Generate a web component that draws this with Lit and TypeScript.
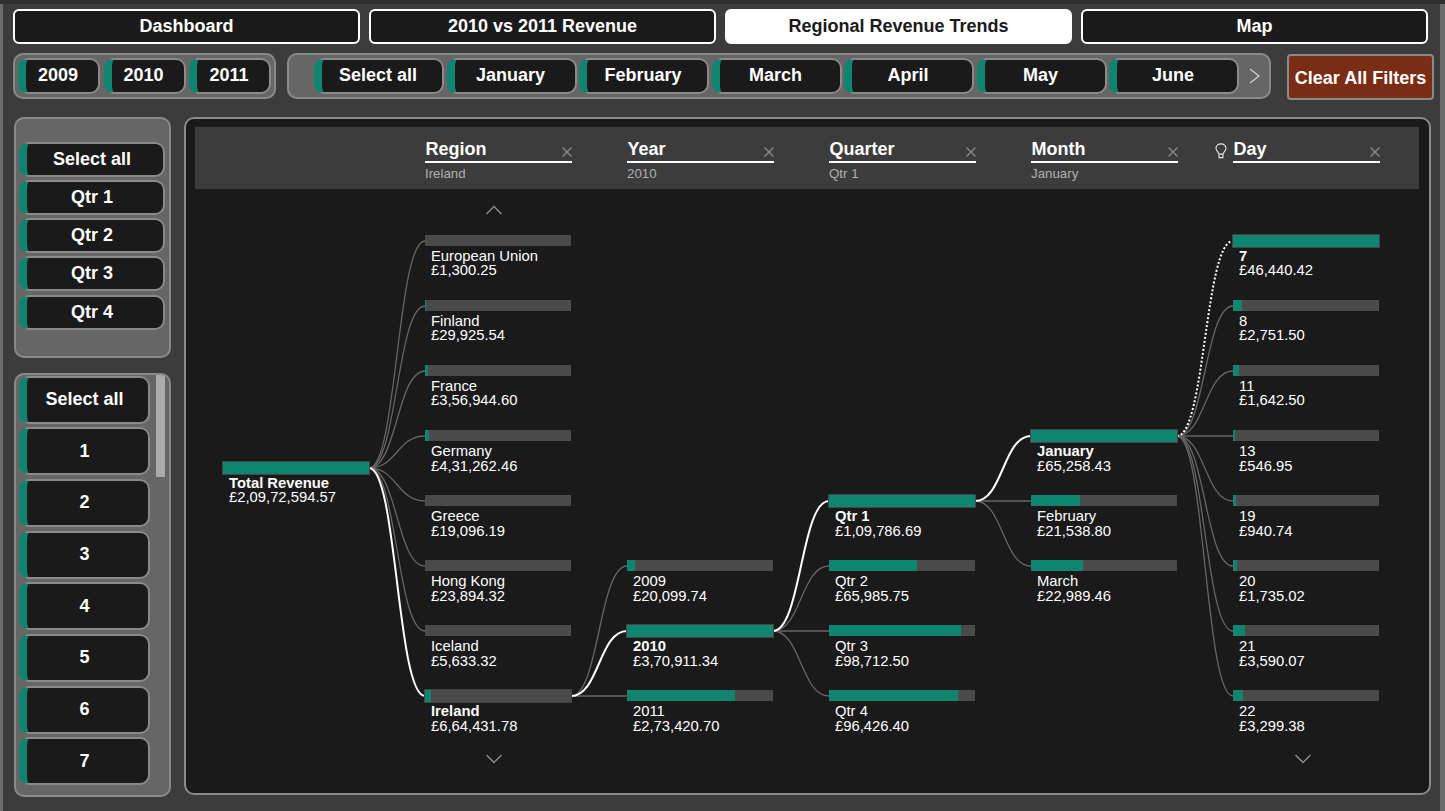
import { LitElement, css, html, svg } from 'lit';
import { customElement } from 'lit/decorators.js';

type TreeNode = {
  x: number;
  y: number;
  name: string;
  value: string;
  fill: number;
  bold?: boolean;
};

const COL = { region: 425, year: 627, quarter: 829, month: 1031, day: 1233 };
const BAR_W = 146;
// canvas origin in page coords
const OX = 195;
const OY = 189;

const row = (x: number, y: number, name: string, value: string, fill: number, bold = false): TreeNode => ({
  x,
  y,
  name,
  value,
  fill,
  bold,
});

const total = row(223, 462, 'Total Revenue', '£2,09,72,594.57', BAR_W, true);

const regions = [
  row(COL.region, 235, 'European Union', '£1,300.25', 0),
  row(COL.region, 300, 'Finland', '£29,925.54', 1),
  row(COL.region, 365, 'France', '£3,56,944.60', 3),
  row(COL.region, 430, 'Germany', '£4,31,262.46', 4),
  row(COL.region, 495, 'Greece', '£19,096.19', 0),
  row(COL.region, 560, 'Hong Kong', '£23,894.32', 0),
  row(COL.region, 625, 'Iceland', '£5,633.32', 0),
  row(COL.region, 690, 'Ireland', '£6,64,431.78', 6, true),
];

const years = [
  row(COL.year, 560, '2009', '£20,099.74', 8),
  row(COL.year, 625, '2010', '£3,70,911.34', BAR_W, true),
  row(COL.year, 690, '2011', '£2,73,420.70', 108),
];

const quarters = [
  row(COL.quarter, 495, 'Qtr 1', '£1,09,786.69', BAR_W, true),
  row(COL.quarter, 560, 'Qtr 2', '£65,985.75', 88),
  row(COL.quarter, 625, 'Qtr 3', '£98,712.50', 132),
  row(COL.quarter, 690, 'Qtr 4', '£96,426.40', 129),
];

const months = [
  row(COL.month, 430, 'January', '£65,258.43', BAR_W, true),
  row(COL.month, 495, 'February', '£21,538.80', 49),
  row(COL.month, 560, 'March', '£22,989.46', 52),
];

const days = [
  row(COL.day, 235, '7', '£46,440.42', BAR_W, true),
  row(COL.day, 300, '8', '£2,751.50', 9),
  row(COL.day, 365, '11', '£1,642.50', 6),
  row(COL.day, 430, '13', '£546.95', 2),
  row(COL.day, 495, '19', '£940.74', 3),
  row(COL.day, 560, '20', '£1,735.02', 4),
  row(COL.day, 625, '21', '£3,590.07', 12),
  row(COL.day, 690, '22', '£3,299.38', 10),
];

const levels: [TreeNode, TreeNode[]][] = [
  [total, regions],
  [regions[7], years],
  [years[1], quarters],
  [quarters[0], months],
  [months[0], days],
];

const headers = [
  { title: 'Region', sub: 'Ireland' },
  { title: 'Year', sub: '2010' },
  { title: 'Quarter', sub: 'Qtr 1' },
  { title: 'Month', sub: 'January' },
  { title: 'Day', sub: '', bulb: true },
];

const chevron = (dir: 'up' | 'down', x: number, y: number) => html`
  <svg class="chev" style="left:${x - OX}px;top:${y - OY}px" width="18" height="10" viewBox="0 0 18 10">
    <path d=${dir === 'up' ? 'M1.5 9 L9 1.5 L16.5 9' : 'M1.5 1 L9 8.5 L16.5 1'} fill="none" stroke="#8c8c8c" stroke-width="1.4"></path>
  </svg>
`;

@customElement('decomp-tree')
export class DecompTree extends LitElement {
  static styles = css`
    :host {
      display: block;
      position: relative;
      height: 596px;
      font-family: 'Liberation Sans', Arial, sans-serif;
      color: #fff;
    }
    svg.links {
      position: absolute;
      left: 0;
      top: 0;
    }
    .node {
      position: absolute;
      width: 146px;
      font-size: 14.8px;
      line-height: 14px;
    }
    .bar {
      height: 11px;
      background: #4a4a4a;
      margin-bottom: 3px;
    }
    .bar.sel {
      height: 12px;
      margin-bottom: 2px;
      outline: 1px solid #444;
    }
    .fill {
      height: 100%;
      background: #0f846e;
    }
    .label {
      padding-left: 6px;
      white-space: nowrap;
    }
    .name.bold {
      font-weight: 700;
    }
    .value.low {
      margin-top: 1px;
    }
    .chev {
      position: absolute;
    }
  `;

  private link(from: TreeNode, to: TreeNode) {
    const x0 = from.x + BAR_W - OX;
    const y0 = from.y + 6 - OY;
    const x1 = to.x - OX;
    const y1 = to.y + 6 - OY;
    const mid = (x0 + x1) / 2;
    const d = `M${x0} ${y0} C${mid} ${y0} ${mid} ${y1} ${x1} ${y1}`;
    if (to === days[0]) return svg`<path d=${d} fill="none" stroke="#fff" stroke-width="2" stroke-dasharray="2 2"></path>`;
    return svg`<path d=${d} fill="none" stroke=${to.bold ? '#fff' : '#666'} stroke-width=${to.bold ? 2 : 1.3}></path>`;
  }

  render() {
    const nodes = [total, ...regions, ...years, ...quarters, ...months, ...days];
    // draw highlighted links last so they sit on top
    const pairs = levels.flatMap(([p, kids]) => kids.map((k) => [p, k] as [TreeNode, TreeNode]));
    pairs.sort((a, b) => Number(!!a[1].bold) - Number(!!b[1].bold));
    return html`
      <svg class="links" width="1224" height="596">
        ${pairs.map(([p, k]) => this.link(p, k))}
      </svg>
      ${nodes.map(
        (n) => html`
          <div class="node" style="left:${n.x - OX}px;top:${n.y - OY}px">
            <div class="bar ${n.bold ? 'sel' : ''}">
              <div class="fill" style="width:${n.fill}px"></div>
            </div>
            <div class="label">
              <div class="name ${n.bold ? 'bold' : ''}">${n.name}</div>
              <div class="value ${n.y >= 430 && n !== total ? 'low' : ''}">${n.value}</div>
            </div>
          </div>
        `
      )}
      ${chevron('up', 485, 205)} ${chevron('down', 485, 754)} ${chevron('down', 1294, 754)}
    `;
  }
}

@customElement('app-root')
export class AppRoot extends LitElement {
  static styles = css`
    :host {
      display: block;
      width: 1445px;
      height: 811px;
      overflow: hidden;
      background: #2e2e2e;
      padding-top: 4px;
      box-sizing: border-box;
      font-family: 'Liberation Sans', Arial, sans-serif;
      color: #fff;
    }
    * {
      box-sizing: border-box;
    }
    .page {
      height: 807px;
      background: #3c3c3c;
      border-left: 3px solid #6b6b6b;
      border-right: 5px solid #6b6b6b;
      padding: 5px 0 0 10px;
    }
    .tabs {
      display: flex;
      gap: 9px;
    }
    .tab {
      width: 347px;
      height: 35px;
      border: 2px solid #fff;
      border-radius: 6px;
      background: #1a1a1a;
      font-size: 18px;
      font-weight: 700;
      display: flex;
      align-items: center;
      justify-content: center;
    }
    .tab.on {
      background: #fff;
      color: #1a1a1a;
    }
    .filters {
      display: flex;
      align-items: flex-start;
      margin-top: 9px;
    }
    .group {
      height: 46px;
      background: #666;
      border: 2px solid #8a8a8a;
      border-radius: 10px;
      display: flex;
      align-items: center;
    }
    .years {
      width: 263px;
      padding-left: 3px;
      gap: 3.5px;
      margin-right: 11px;
    }
    .months {
      width: 984px;
      padding-left: 25px;
      gap: 2.5px;
      margin-right: 16px;
    }
    .btn {
      background: #1a1a1a;
      border: 2px solid #8a8a8a;
      border-left: 8px solid #0f846e;
      border-radius: 10px;
      padding-right: 6px;
      font-size: 18px;
      font-weight: 700;
      display: flex;
      align-items: center;
      justify-content: center;
      flex: none;
    }
    .group .btn {
      height: 36px;
      padding-right: 8px;
      padding-bottom: 2px;
    }
    .years .btn {
      width: 82px;
    }
    .months .btn {
      width: 130px;
    }
    .next {
      margin-left: 7.5px;
      flex: none;
    }
    .clear {
      width: 147px;
      height: 46px;
      margin-top: 1px;
      padding-top: 2px;
      background: #7b2c14;
      border: 2px solid #8a8a8a;
      border-radius: 4px;
      font-size: 18px;
      font-weight: 700;
      display: flex;
      align-items: center;
      justify-content: center;
      white-space: nowrap;
    }
    .body {
      display: flex;
      margin-top: 17px;
      margin-left: 1px;
    }
    .side {
      width: 157px;
      margin-right: 13px;
      display: flex;
      flex-direction: column;
      gap: 15px;
    }
    .panel {
      background: #666;
      border: 2px solid #8a8a8a;
      border-radius: 10px;
      position: relative;
      overflow: hidden;
    }
    .quarters {
      height: 241px;
      padding: 23px 0 0 3px;
      display: flex;
      flex-direction: column;
      gap: 3.15px;
    }
    .quarters .btn {
      width: 146px;
      height: 35px;
    }
    .days {
      height: 424px;
      padding: 0.5px 0 0 3px;
      display: flex;
      flex-direction: column;
      gap: 3.7px;
    }
    .days .btn {
      width: 131px;
      height: 48px;
    }
    .thumb {
      position: absolute;
      left: 140px;
      top: 0;
      width: 9px;
      height: 102px;
      background: #ababab;
    }
    .main {
      width: 1247px;
      height: 678px;
      background: #1a1a1a;
      border: 2px solid #8a8a8a;
      border-radius: 10px;
      padding: 8px 10px 0 9px;
    }
    .head {
      height: 62px;
      background: #3c3c3c;
      display: flex;
      gap: 55.5px;
      padding: 11px 0 0 230px;
    }
    .col {
      width: 146.5px;
      position: relative;
    }
    .col-title {
      height: 25px;
      padding-left: 0.5px;
      font-size: 18px;
      line-height: 22px;
      font-weight: 700;
      border-bottom: 2px solid #fff;
    }
    .col-sub {
      margin-top: 4px;
      font-size: 13.3px;
      line-height: 14px;
      color: #b0b0b0;
    }
    .close {
      position: absolute;
      right: 0;
      top: 9px;
    }
    .bulb {
      position: absolute;
      left: -18px;
      top: 5px;
    }
  `;

  render() {
    const monthNames = ['Select all', 'January', 'February', 'March', 'April', 'May', 'June'];
    return html`
      <div class="page">
        <div class="tabs">
          <div class="tab">Dashboard</div>
          <div class="tab">2010 vs 2011 Revenue</div>
          <div class="tab on">Regional Revenue Trends</div>
          <div class="tab">Map</div>
        </div>

        <div class="filters">
          <div class="group years">
            ${['2009', '2010', '2011'].map((y) => html`<div class="btn">${y}</div>`)}
          </div>
          <div class="group months">
            ${monthNames.map((m) => html`<div class="btn">${m}</div>`)}
            <svg class="next" width="11" height="16" viewBox="0 0 11 16">
              <path d="M1 1 L10 8 L1 15" fill="none" stroke="#d0d0d0" stroke-width="1.4"></path>
            </svg>
          </div>
          <div class="clear">Clear All Filters</div>
        </div>

        <div class="body">
          <div class="side">
            <div class="panel quarters">
              ${['Select all', 'Qtr 1', 'Qtr 2', 'Qtr 3', 'Qtr 4'].map((q) => html`<div class="btn">${q}</div>`)}
            </div>
            <div class="panel days">
              ${['Select all', '1', '2', '3', '4', '5', '6', '7'].map((d) => html`<div class="btn">${d}</div>`)}
              <div class="thumb"></div>
            </div>
          </div>

          <div class="main">
            <div class="head">
              ${headers.map(
                (h) => html`
                  <div class="col">
                    ${h.bulb
                      ? html`<svg class="bulb" width="12" height="16" viewBox="0 0 14 18.6">
                          <path
                            d="M4.7 13 C4.4 10.6 1.2 9.4 1.2 6 C1.2 3 3.6 1 7 1 C10.4 1 12.8 3 12.8 6 C12.8 9.4 9.6 10.6 9.3 13 Z M4.7 13 V17 H9.3 V13"
                            fill="none"
                            stroke="#e6e6e6"
                            stroke-width="1.3"
                          ></path>
                        </svg>`
                      : ''}
                    <div class="col-title">${h.title}</div>
                    <div class="col-sub">${h.sub}</div>
                    <svg class="close" width="10" height="10" viewBox="0 0 10 10">
                      <path d="M0.5 0.5 L9.5 9.5 M9.5 0.5 L0.5 9.5" stroke="#8c8c8c" stroke-width="1.3"></path>
                    </svg>
                  </div>
                `
              )}
            </div>
            <decomp-tree></decomp-tree>
          </div>
        </div>
      </div>
    `;
  }
}
